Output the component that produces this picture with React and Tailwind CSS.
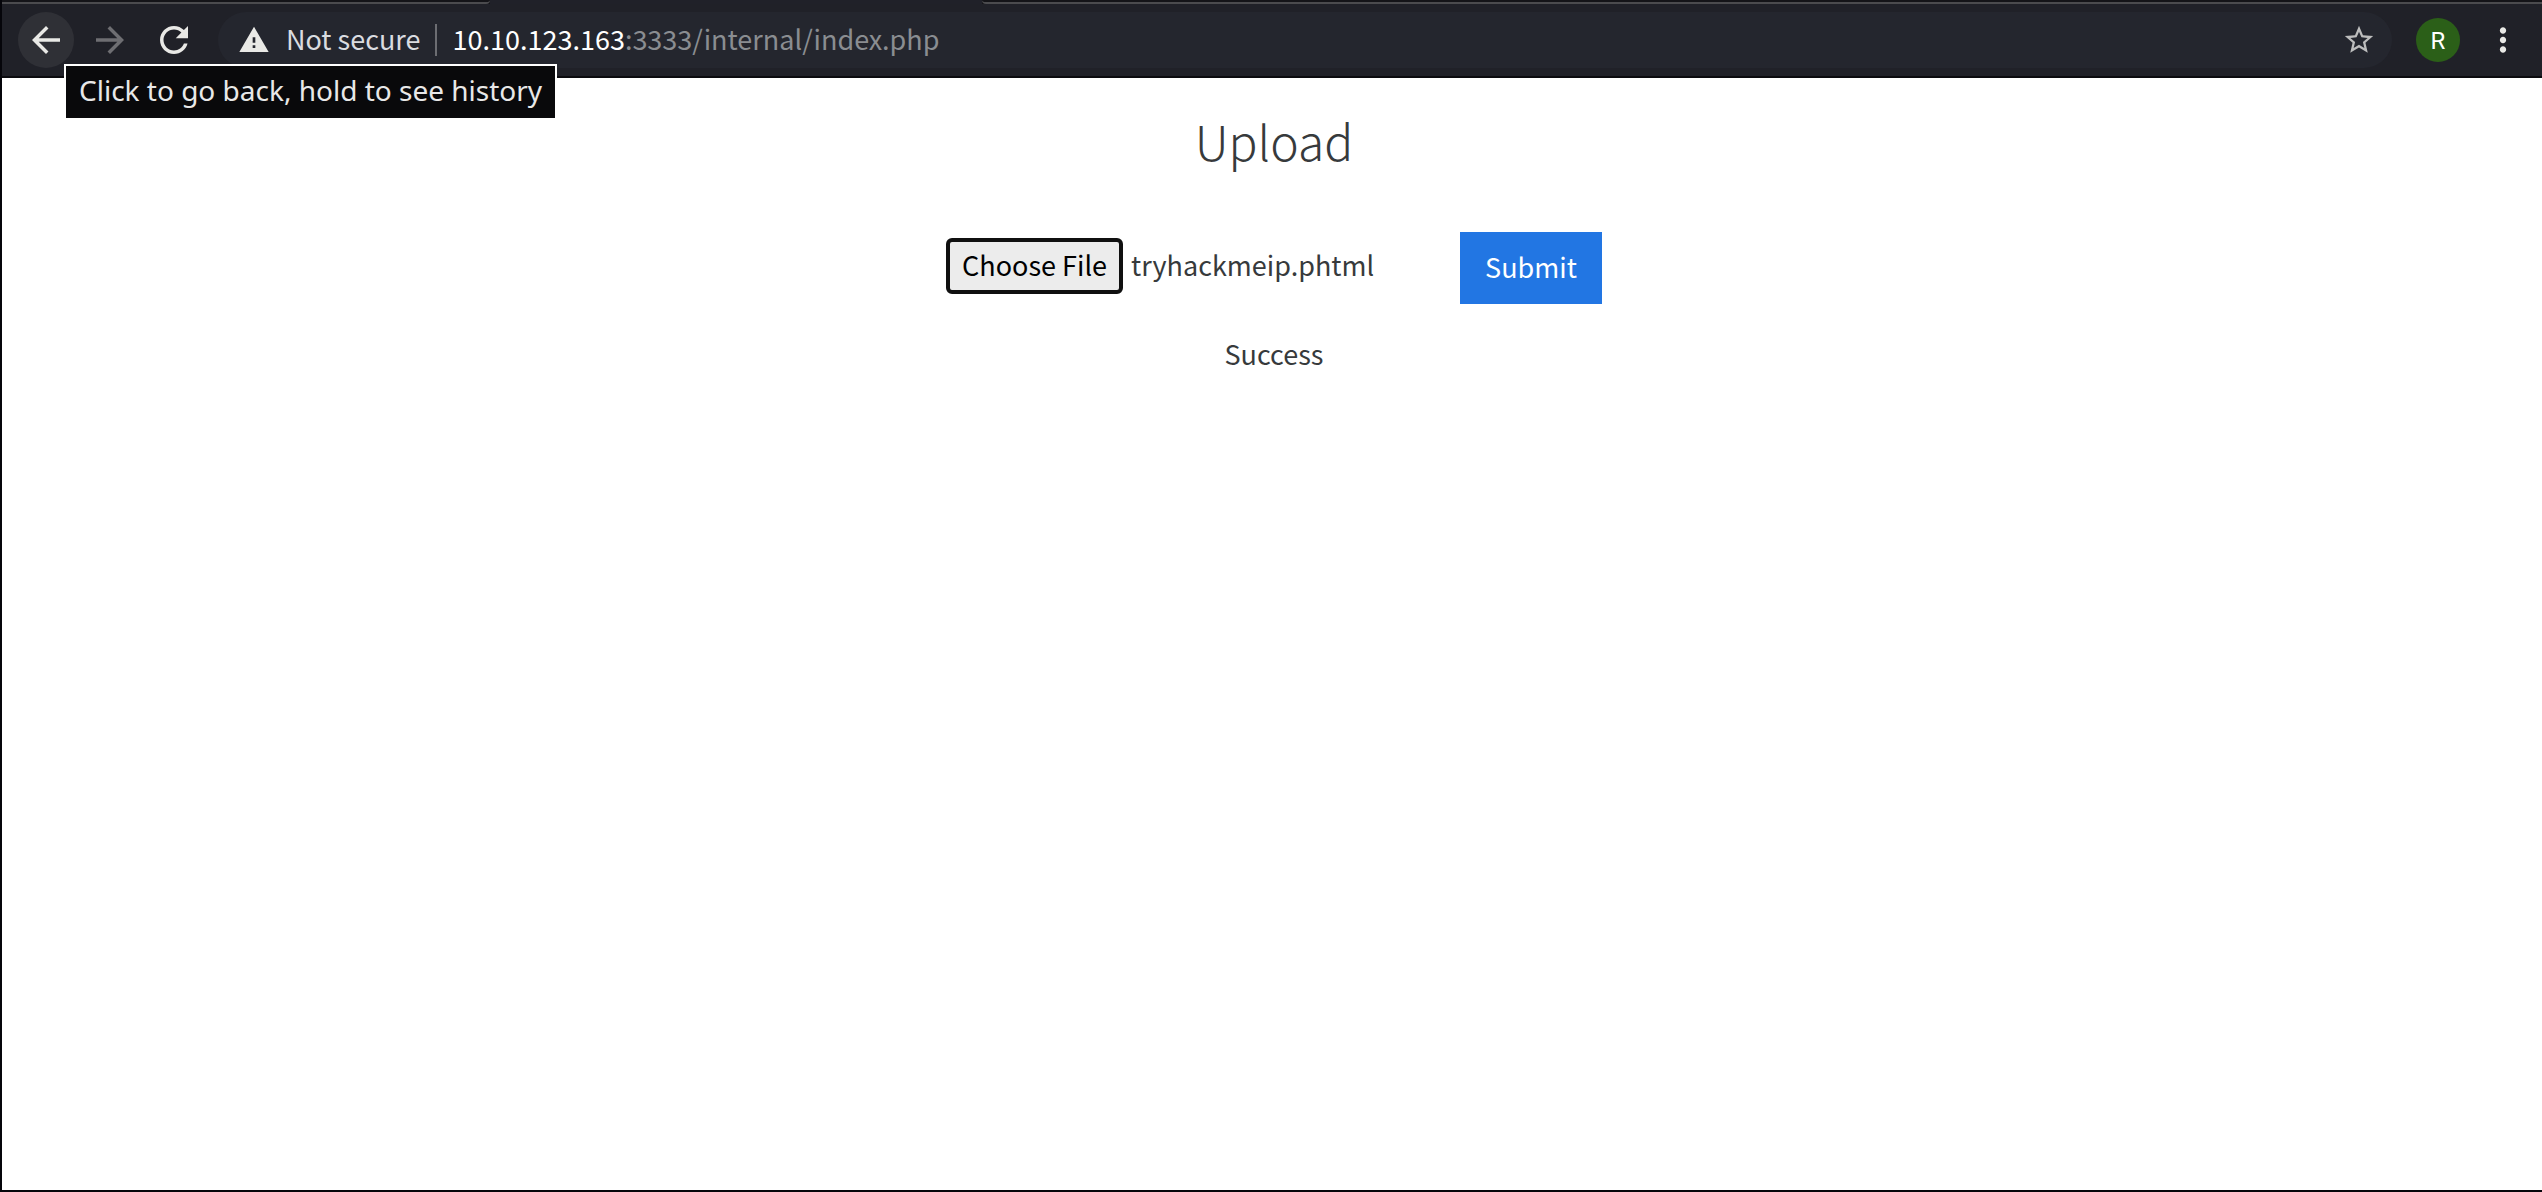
import { useEffect, useRef } from "react";

function Glyph({ d, className }) {
  return (
    <svg viewBox="0 0 24 24" fill="currentColor" className={className} aria-hidden="true">
      <path d={d} />
    </svg>
  );
}

const ICONS = {
  back: "M20 11H7.83l5.59-5.59L12 4l-8 8 8 8 1.41-1.41L7.83 13H20v-2z",
  forward: "M12 4l-1.41 1.41L16.17 11H4v2h12.17l-5.58 5.59L12 20l8-8z",
  reload:
    "M17.65 6.35C16.2 4.9 14.21 4 12 4c-4.42 0-7.99 3.58-7.99 8s3.57 8 7.99 8c3.73 0 6.84-2.55 7.73-6h-2.08c-.82 2.33-3.04 4-5.65 4-3.31 0-6-2.69-6-6s2.69-6 6-6c1.66 0 3.14.69 4.22 1.78L13 11h7V4l-2.35 2.35z",
  warning: "M1 21h22L12 2 1 21zm12-3h-2v-2h2v2zm0-4h-2v-4h2v4z",
  star: "M22 9.24l-7.19-.62L12 2 9.19 8.63 2 9.24l5.46 4.73L5.82 21 12 17.27 18.18 21l-1.63-7.03L22 9.24zM12 15.4l-3.76 2.27 1-4.28-3.32-2.88 4.38-.38L12 6.1l1.71 4.04 4.38.38-3.32 2.88 1 4.28L12 15.4z",
  menu: "M12 8c1.1 0 2-.9 2-2s-.9-2-2-2-2 .9-2 2 .9 2 2 2zm0 2c-1.1 0-2 .9-2 2s.9 2 2 2 2-.9 2-2-.9-2-2-2zm0 6c-1.1 0-2 .9-2 2s.9 2 2 2 2-.9 2-2-.9-2-2-2z",
};

function TabStrip() {
  return (
    <div className="flex h-1 bg-[#141418]">
      <div className="w-[488px] rounded-br border-b-2 border-[#4b4b4e]" />
      <div className="w-[492px] bg-[#202129]" />
      <div className="flex-1 rounded-bl border-b-2 border-[#4b4b4e]" />
    </div>
  );
}

function Toolbar() {
  return (
    <header className="relative flex h-[74px] items-center border-b-2 border-[#0b0b0f] bg-[#202128] pr-5 pl-4 text-[#e9e9e6]">
      <button
        type="button"
        aria-label="Back"
        aria-describedby="back-tip"
        className="flex size-14 items-center justify-center rounded-full bg-[#2f3036]"
      >
        <Glyph d={ICONS.back} className="size-[42px]" />
      </button>
      <button
        type="button"
        aria-label="Forward"
        className="ml-2 flex size-14 items-center justify-center rounded-full text-[#6e6e72]"
      >
        <Glyph d={ICONS.forward} className="size-[42px]" />
      </button>
      <button
        type="button"
        aria-label="Reload"
        className="ml-2 flex size-14 items-center justify-center rounded-full"
      >
        <Glyph d={ICONS.reload} className="size-[42px]" />
      </button>

      <div className="ml-4 flex h-14 flex-1 items-center rounded-full bg-[#24262e] pr-3 pl-5 text-[27px] leading-10 whitespace-nowrap">
        <Glyph d={ICONS.warning} className="size-8" />
        <span className="ml-4 pb-0.5 text-[#dadce0]">Not secure</span>
        <span className="ml-3.5 h-8 w-0.5 bg-[#6c6d72]" />
        <span className="ml-4 flex-1 pb-0.5 text-[#8a8d91]">
          <span className="text-white">10.10.123.163</span>:3333/internal/index.php
        </span>
        <button type="button" aria-label="Bookmark this page" className="p-1 text-[#bdbdbd]">
          <Glyph d={ICONS.star} className="size-[34px]" />
        </button>
      </div>

      <button
        type="button"
        aria-label="Profile"
        className="ml-6 flex size-11 items-center justify-center rounded-full bg-[#2b5f18] pt-0.5 font-['Roboto',sans-serif] text-2xl text-white"
      >
        R
      </button>
      <button type="button" aria-label="Menu" className="ml-6">
        <Glyph d={ICONS.menu} className="size-[38px]" />
      </button>

      <div
        id="back-tip"
        role="tooltip"
        className="absolute top-[60px] left-[62px] border-2 border-white bg-[#09090b] px-[13px] pt-1.5 pb-2.5 font-['Noto_Sans',sans-serif] text-[28px] leading-9 whitespace-nowrap text-[#e8e8e8]"
      >
        Click to go back, hold to see history
      </div>
    </header>
  );
}

function UploadForm() {
  const fileRef = useRef(null);

  useEffect(() => {
    const transfer = new DataTransfer();
    transfer.items.add(new File([""], "tryhackmeip.phtml"));
    fileRef.current.files = transfer.files;
  }, []);

  return (
    <main className="flex flex-1 flex-col items-center bg-white pt-[30px] pl-1 text-[27px] leading-10 text-[#373a3c]">
      <h1 className="text-5xl leading-[64px] font-light">Upload</h1>
      <form className="mt-[60px] flex items-center" onSubmit={(e) => e.preventDefault()}>
        <input
          ref={fileRef}
          type="file"
          aria-label="File to upload"
          className="w-[514px] pb-1 file:mr-2 file:h-14 file:rounded-md file:border-4 file:border-[#101010] file:bg-[#ececec] file:px-3 file:pb-0.5 file:text-black"
        />
        <button type="submit" className="h-[72px] bg-[#2276e3] px-[25px] pb-0.5 text-white">
          Submit
        </button>
      </form>
      <p className="mt-[30px]">Success</p>
    </main>
  );
}

export default function App() {
  return (
    <div className="flex min-h-screen flex-col border-b-2 border-l-2 border-[#05050a] font-['Noto_Sans_CJK_SC',sans-serif]">
      <TabStrip />
      <Toolbar />
      <UploadForm />
    </div>
  );
}
